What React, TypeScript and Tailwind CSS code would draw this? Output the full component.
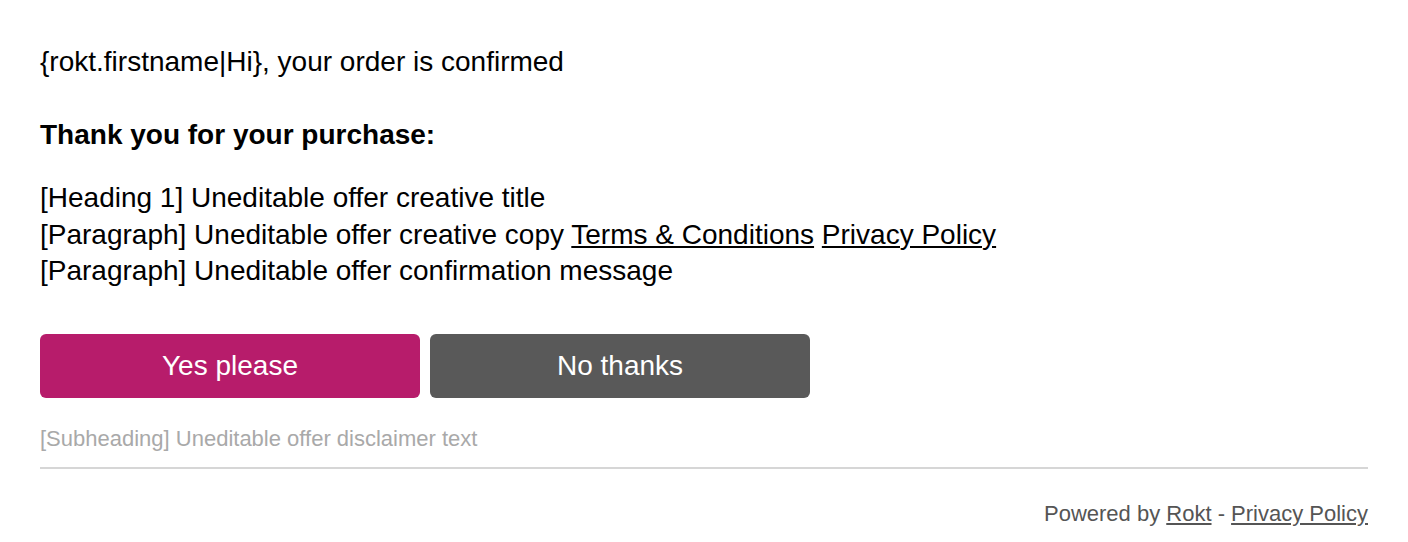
const App = () => {
  return (
    <div className="min-h-screen bg-white px-[40px] pt-[44px] text-black" style={{ fontFamily: '"Liberation Sans", Arial, sans-serif' }}>
      {/* Greeting */}
      <p className="text-[28px] leading-[36px]">{"{rokt.firstname|Hi}"}, your order is confirmed</p>

      <p className="mt-[37px] text-[28px] font-bold leading-[36px]">Thank you for your purchase:</p>

      {/* Offer copy */}
      <div className="mt-[27px] text-[28px] leading-[36.5px]">
        <p>[Heading 1] Uneditable offer creative title</p>
        <p>
          [Paragraph] Uneditable offer creative copy{" "}
          <a href="#" className="underline">Terms &amp; Conditions</a>{" "}
          <a href="#" className="underline">Privacy Policy</a>
        </p>
        <p>[Paragraph] Uneditable offer confirmation message</p>
      </div>

      {/* Buttons */}
      <div className="mt-[44px] flex gap-[10px]">
        <button className="h-[64px] w-[380px] rounded-[6px] bg-[#b71c6b] text-[28px] text-white">Yes please</button>
        <button className="h-[64px] w-[380px] rounded-[6px] bg-[#595959] text-[28px] text-white">No thanks</button>
      </div>

      <p className="mt-[27px] text-[22px] leading-[28px] text-[#a9a9a9]">[Subheading] Uneditable offer disclaimer text</p>

      <div className="mt-[14px] h-[2px] bg-[#d6d6d6]" />

      <p className="mt-[31px] text-right text-[22px] leading-[28px] text-[#555555]">
        Powered by <a href="#" className="underline">Rokt</a> - <a href="#" className="underline">Privacy Policy</a>
      </p>
    </div>
  );
};

export default App;
